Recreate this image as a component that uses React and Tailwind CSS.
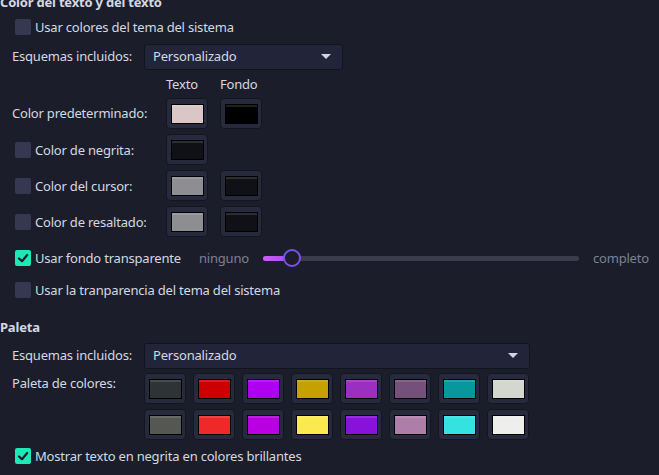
import React from "react";

const font = { fontFamily: '"Noto Sans", "Open Sans", sans-serif' };

function CheckBox({ checked }) {
  return checked ? (
    <span className="flex h-4 w-4 shrink-0 items-center justify-center rounded-[2px] bg-[#1de9b6]">
      <svg width="12" height="12" viewBox="0 0 12 12">
        <polyline points="2,6.5 5,9.2 10.2,3" fill="none" stroke="#1b1e2a" strokeWidth="2.2" strokeLinecap="round" strokeLinejoin="round" />
      </svg>
    </span>
  ) : (
    <span className="h-4 w-4 shrink-0 rounded-[2px] bg-[#353850]" />
  );
}

function Swatch({ color }) {
  return (
    <div className="flex h-[31px] w-[42px] shrink-0 items-center justify-center rounded-[4px] border border-[#14161f] bg-[#262a3c]">
      <div
        className="h-[20px] w-[33px] border border-black shadow-[inset_0_2px_0_rgba(255,255,255,0.12)]"
        style={{ backgroundColor: color }}
      />
    </div>
  );
}

function Combo({ width }) {
  return (
    <div
      className="flex h-[26px] items-center justify-between rounded-[3px] border border-[#12141c] bg-[#22253a] pl-[8px] pr-[11px]"
      style={{ width }}
    >
      <span>Personalizado</span>
      <svg width="10" height="6" viewBox="0 0 10 6">
        <polygon points="0,0 10,0 5,5" fill="#d3d5de" />
      </svg>
    </div>
  );
}

function CheckRow({ checked, label, className = "" }) {
  return (
    <div className={`flex h-4 items-center gap-[4px] pl-[15px] ${className}`}>
      <CheckBox checked={checked} />
      <span className="leading-4">{label}</span>
    </div>
  );
}

const row1 = ["#2e3436", "#cc0000", "#b000f0", "#c4a000", "#9b2fbf", "#75507b", "#06989a", "#d3d7cf"];
const row2 = ["#555753", "#ef2929", "#b800e0", "#fce94f", "#8812d9", "#ad7fa8", "#34e2e2", "#eeeeec"];

export default function App() {
  return (
    <div
      className="h-[475px] w-[659px] overflow-hidden bg-[#1b1e2a] text-[13px] tracking-[-0.2px] text-[#d5d8e0]"
      style={font}
    >
      <h2 className="-mt-[6px] h-4 font-bold leading-4">Color del texto y del texto</h2>

      <CheckRow label="Usar colores del tema del sistema" className="mt-[9px]" />

      <div className="mt-[9px] flex items-center">
        <span className="w-[144px] pl-[12px]">Esquemas incluidos:</span>
        <Combo width={199} />
      </div>

      <div className="mt-[6px] flex h-4 items-center pl-[166px] leading-4">
        <span className="w-[54px]">Texto</span>
        <span>Fondo</span>
      </div>

      <div className="mt-[6px] flex items-center">
        <span className="w-[166px] pl-[12px]">Color predeterminado:</span>
        <div className="flex gap-[12px]">
          <Swatch color="#dac6c6" />
          <Swatch color="#000000" />
        </div>
      </div>

      <div className="mt-[5px] flex items-center">
        <div className="w-[166px]">
          <CheckRow label="Color de negrita:" />
        </div>
        <Swatch color="#101116" />
      </div>

      <div className="mt-[5px] flex items-center">
        <div className="w-[166px]">
          <CheckRow label="Color del cursor:" />
        </div>
        <div className="flex gap-[12px]">
          <Swatch color="#8e8e92" />
          <Swatch color="#101116" />
        </div>
      </div>

      <div className="mt-[5px] flex items-center">
        <div className="w-[166px]">
          <CheckRow label="Color de resaltado:" />
        </div>
        <div className="flex gap-[12px]">
          <Swatch color="#8e8e92" />
          <Swatch color="#101116" />
        </div>
      </div>

      <div className="mt-[13px] flex h-4 items-center">
        <div className="w-[199px]">
          <CheckRow checked label="Usar fondo transparente" />
        </div>
        <span className="w-[64px] leading-4 text-[#7d8192]">ninguno</span>
        <div className="relative flex h-[20px] w-[316px] items-center">
          <div className="h-[5px] w-full rounded-full bg-[#3a3c4c]" />
          <div className="absolute left-0 top-[7.5px] h-[5px] w-[24px] rounded-full bg-gradient-to-r from-[#c761f2] to-[#a54ff3]" />
          <div className="absolute left-[20px] top-[1px] h-[18px] w-[18px] rounded-full border-2 border-[#7a50ee] bg-[#1b1e2a]" />
        </div>
        <span className="ml-[14px] leading-4 text-[#7d8192]">completo</span>
      </div>

      <CheckRow label="Usar la tranparencia del tema del sistema" className="mt-[16px]" />

      <h2 className="mt-[21px] h-4 font-bold leading-4">Paleta</h2>

      <div className="mt-[8px] flex items-center">
        <span className="w-[144px] pl-[12px]">Esquemas incluidos:</span>
        <Combo width={386} />
      </div>

      <div className="mt-[4px] flex">
        <span className="w-[144px] pl-[12px] pt-[1px]">Paleta de colores:</span>
        <div className="flex flex-col gap-[5px]">
          <div className="flex gap-[7px]">
            {row1.map((c) => (
              <Swatch key={c} color={c} />
            ))}
          </div>
          <div className="flex gap-[7px]">
            {row2.map((c) => (
              <Swatch key={c} color={c} />
            ))}
          </div>
        </div>
      </div>

      <CheckRow checked label="Mostrar texto en negrita en colores brillantes" className="mt-[8px]" />
    </div>
  );
}
